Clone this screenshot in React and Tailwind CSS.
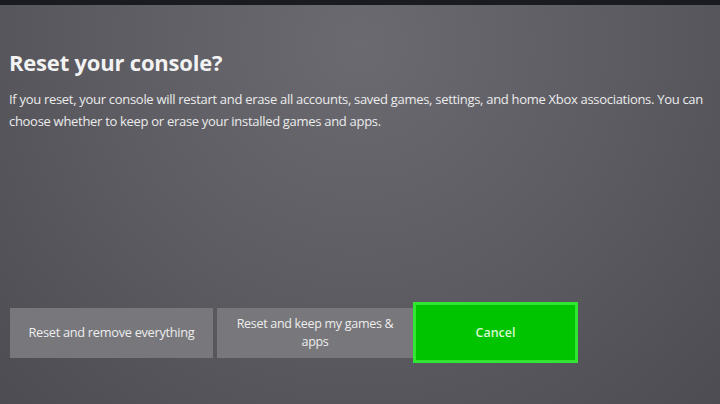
export default function App() {
  return (
    <div className="w-[720px] h-[404px] overflow-hidden flex flex-col bg-[#5a5a60]" style={{ fontFamily: '"Open Sans", "Noto Sans", sans-serif' }}>
      <div className="h-[5px] bg-[#1a1a22] shrink-0" />
      <div className="flex-1 flex flex-col bg-[radial-gradient(ellipse_at_50%_10%,#6a6a70_0%,#5c5c62_50%,#4c4c52_100%)] px-[9px]">
        <h1 className="mt-[43px] text-[22px] leading-[28px] font-bold text-[#f2f2f2] tracking-[-0.2px]">Reset your console?</h1>
        <p className="mt-[12px] text-[13px] leading-[22px] font-medium text-[#ececec] tracking-[-0.3px] w-[705px]">
          If you reset, your console will restart and erase all accounts, saved games, settings, and home Xbox associations. You can choose whether to keep or erase your installed games and apps.
        </p>
        <div className="mt-[170px] flex items-center">
          <div className="ml-[1px] w-[203px] h-[50px] bg-[#78787c] flex items-center justify-center text-[12.8px] font-medium text-[#ededed] tracking-[-0.3px]">
            Reset and remove everything
          </div>
          <div className="ml-[4px] w-[196px] h-[50px] bg-[#78787c] flex items-center justify-center text-center text-[12.5px] leading-[18px] font-medium text-[#ededed] tracking-[-0.3px] px-[14px]">
            Reset and keep my games &amp; apps
          </div>
          <div className="w-[165px] h-[61px] bg-[#00c400] border-[3px] border-[#30e630] flex items-center justify-center pt-[2px] text-[12.5px] font-semibold text-[#d8f8d0]">
            Cancel
          </div>
        </div>
      </div>
    </div>
  );
}
